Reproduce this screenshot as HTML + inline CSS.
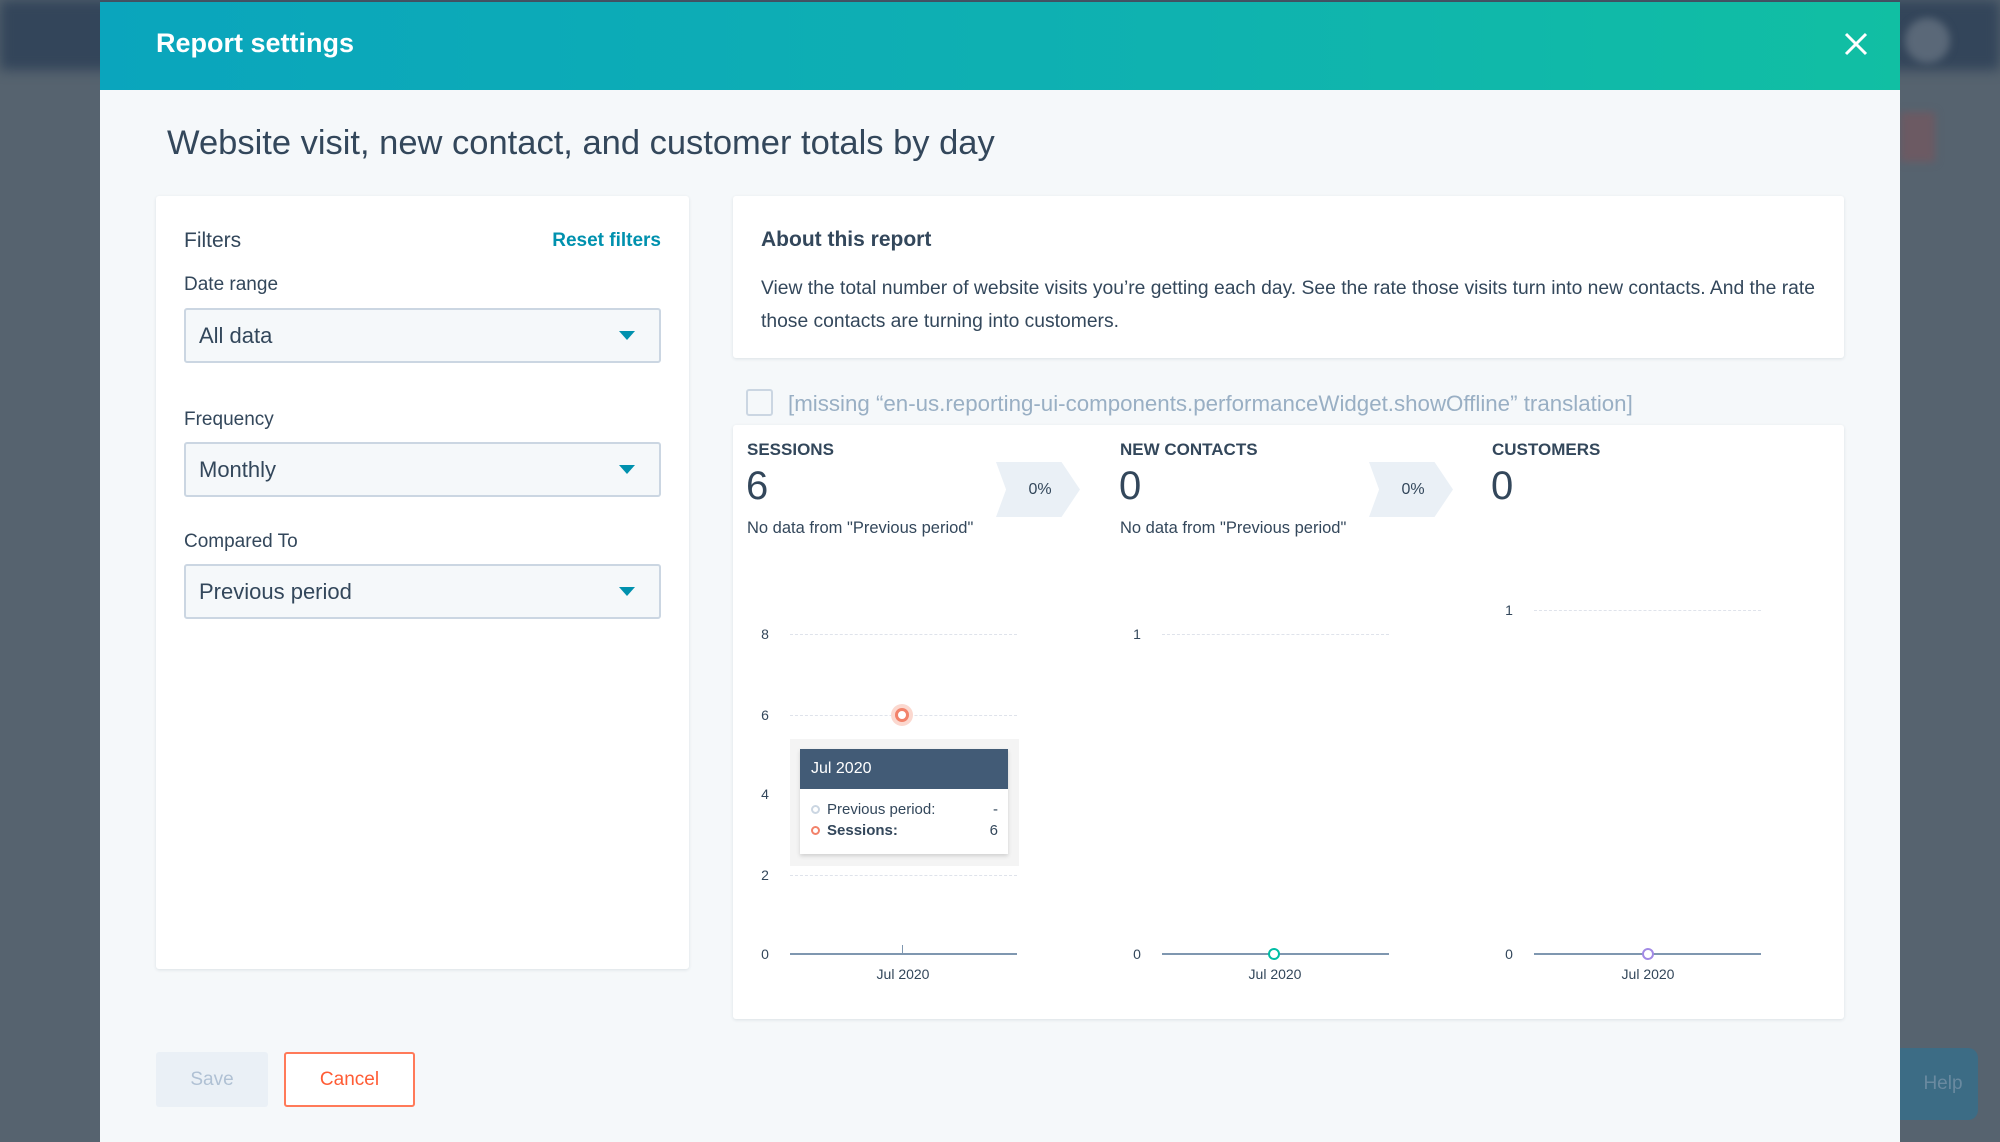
<!DOCTYPE html>
<html><head><meta charset="utf-8"><style>
*{box-sizing:border-box;margin:0;padding:0}
body{width:2000px;height:1142px;overflow:hidden;background:#56636f;font-family:"Liberation Sans",sans-serif;color:#33475b;position:relative}
.abs{position:absolute}
.topband{left:0;top:0;width:2000px;height:70px;background:#33455a;filter:blur(6px)}
.modal{left:100px;top:2px;width:1800px;height:1140px;background:#f5f8fa}
.hdr{left:0;top:0;width:1800px;height:88px;background:linear-gradient(90deg,#0aa5bd,#0fb2b0 60%,#11bfa3)}
.card{background:#fff;border-radius:3px;box-shadow:0 1px 3px rgba(45,62,80,.12)}
.sel{position:absolute;left:28px;width:477px;height:55px;background:#f5f8fa;border:2px solid #cbd6e2;border-radius:3px;font-size:22px;padding:0 13px;line-height:51px;color:#33475b}
.sel:after{content:"";position:absolute;right:24px;top:21px;border-left:8px solid transparent;border-right:8px solid transparent;border-top:9px solid #0091ae}
.lbl{position:absolute;left:28px;font-size:19px}
.grid{position:absolute;border-top:1px dashed #dfe3eb;height:0}
.ax{position:absolute;font-size:14px;width:20px;text-align:center}
.cat{position:absolute;font-size:17px;font-weight:bold;color:#33475b}
.big{position:absolute;font-size:40px;font-weight:300}
.nd{position:absolute;font-size:16.5px}
.chev{position:absolute;width:84px;height:55px;background:#eaf0f6;clip-path:polygon(0 0,78% 0,100% 50%,78% 100%,0 100%,12% 50%);font-size:16px;text-align:center;line-height:55px;padding-left:4px}
.dot{position:absolute;width:14px;height:14px;border-radius:50%;background:#fff}
</style></head><body>
<div class="abs topband"></div>
<div class="abs" style="left:1905px;top:18px;width:45px;height:45px;border-radius:50%;background:#5a6878;filter:blur(4px)"></div>
<div class="abs" style="left:1900px;top:112px;width:35px;height:50px;background:#6c5a63;filter:blur(4px)"></div>
<div class="abs" style="left:1900px;top:1048px;width:78px;height:72px;background:#3c6c85;border-radius:0 10px 10px 0;color:#6a8aa0;font-size:19px;line-height:72px;text-align:center;padding-left:8px">Help</div>
<div class="abs modal">
 <div class="abs hdr"></div>
 <div class="abs" style="left:56px;top:26px;font-size:27px;color:#fff;font-weight:bold">Report settings</div>
 <svg class="abs" style="left:1744px;top:30px" width="24" height="24"><path d="M2 2L22 22M22 2L2 22" stroke="#fff" stroke-width="3"/></svg>
 <div class="abs" style="left:67px;top:122px;font-size:34.5px;font-weight:300;color:#33475b">Website visit, new contact, and customer totals by day</div>

 <div class="abs card" style="left:56px;top:194px;width:533px;height:773px">
  <div class="abs" style="left:28px;top:33px;font-size:21px">Filters</div>
  <div class="abs" style="right:28px;top:34px;font-size:19px;color:#0091ae;font-weight:bold">Reset filters</div>
  <div class="lbl" style="top:78px">Date range</div>
  <div class="sel" style="top:112px">All data</div>
  <div class="lbl" style="top:213px">Frequency</div>
  <div class="sel" style="top:246px">Monthly</div>
  <div class="lbl" style="top:335px">Compared To</div>
  <div class="sel" style="top:368px">Previous period</div>
 </div>

 <div class="abs card" style="left:633px;top:194px;width:1111px;height:162px">
  <div class="abs" style="left:28px;top:32px;font-size:21px;font-weight:bold;color:#33475b">About this report</div>
  <div class="abs" style="left:28px;top:76px;width:1070px;font-size:19.3px;line-height:33px">View the total number of website visits you’re getting each day. See the rate those visits turn into new contacts. And the rate those contacts are turning into customers.</div>
 </div>

 <div class="abs" style="left:646px;top:387px;width:27px;height:27px;border:2px solid #cbd6e2;border-radius:3px;background:#f5f8fa"></div>
 <div class="abs" style="left:688px;top:389px;font-size:22.3px;font-weight:300;color:#99afc4">[missing “en-us.reporting-ui-components.performanceWidget.showOffline” translation]</div>

 <div class="abs card" style="left:633px;top:423px;width:1111px;height:594px">
  <div class="cat" style="left:14px;top:15px">SESSIONS</div>
  <div class="big" style="left:13px;top:39px">6</div>
  <div class="nd" style="left:14px;top:94px">No data from "Previous period"</div>
  <div class="chev" style="left:263px;top:37px">0%</div>
  <div class="cat" style="left:387px;top:15px">NEW CONTACTS</div>
  <div class="big" style="left:386px;top:39px">0</div>
  <div class="nd" style="left:387px;top:94px">No data from "Previous period"</div>
  <div class="chev" style="left:636px;top:37px">0%</div>
  <div class="cat" style="left:759px;top:15px">CUSTOMERS</div>
  <div class="big" style="left:758px;top:39px">0</div>

  <div class="ax" style="left:22px;top:201px">8</div><div class="grid" style="left:57px;top:209px;width:227px"></div>
  <div class="ax" style="left:22px;top:282px">6</div><div class="grid" style="left:57px;top:290px;width:227px"></div>
  <div class="ax" style="left:22px;top:361px">4</div>
  <div class="ax" style="left:22px;top:442px">2</div><div class="grid" style="left:57px;top:450px;width:227px"></div>
  <div class="ax" style="left:22px;top:521px">0</div><div class="abs" style="left:57px;top:528px;width:227px;height:2px;background:#7f97b0"></div>
  <div class="abs" style="left:169px;top:520px;width:1px;height:8px;background:#7f97b0"></div>
  <div class="abs" style="left:140px;top:541px;width:60px;text-align:center;font-size:14px">Jul 2020</div>
  <div class="abs" style="left:158px;top:279px;width:22px;height:22px;border-radius:50%;background:#fbd8cf"></div>
  <div class="dot" style="left:162px;top:283px;border:3px solid #f2826a"></div>
  <div class="abs" style="left:57px;top:314px;width:229px;height:127px;background:#f4f4f4"></div>
  <div class="abs" style="left:67px;top:324px;width:208px;height:105px;background:#fff;box-shadow:0 2px 4px rgba(0,0,0,.15)">
   <div style="height:40px;background:#425b76;color:#fff;font-size:16px;line-height:40px;padding-left:11px">Jul 2020</div>
   <div style="position:relative;font-size:15px;padding:10px 11px 0 27px;line-height:21px">Previous period:<br><b>Sessions:</b>
    <span style="position:absolute;left:11px;top:16px;width:9px;height:9px;border:2px solid #cbd6e2;border-radius:50%"></span>
    <span style="position:absolute;left:11px;top:37px;width:9px;height:9px;border:2px solid #f2826a;border-radius:50%"></span>
    <span style="position:absolute;right:10px;top:10px">-</span><span style="position:absolute;right:10px;top:31px">6</span>
   </div>
  </div>

  <div class="ax" style="left:394px;top:201px">1</div><div class="grid" style="left:429px;top:209px;width:227px"></div>
  <div class="ax" style="left:394px;top:521px">0</div><div class="abs" style="left:429px;top:528px;width:227px;height:2px;background:#7f97b0"></div>
  <div class="dot" style="left:535px;top:523px;width:12px;height:12px;border:2.5px solid #00bda5"></div>
  <div class="abs" style="left:512px;top:541px;width:60px;text-align:center;font-size:14px">Jul 2020</div>

  <div class="ax" style="left:766px;top:177px">1</div><div class="grid" style="left:801px;top:185px;width:227px"></div>
  <div class="ax" style="left:766px;top:521px">0</div><div class="abs" style="left:801px;top:528px;width:227px;height:2px;background:#7f97b0"></div>
  <div class="dot" style="left:909px;top:523px;width:12px;height:12px;border:2.5px solid #a28ae5"></div>
  <div class="abs" style="left:885px;top:541px;width:60px;text-align:center;font-size:14px">Jul 2020</div>
 </div>

 <div class="abs" style="left:56px;top:1050px;width:112px;height:55px;background:#eaf0f6;border-radius:3px;color:#b0c1d4;font-size:19px;text-align:center;line-height:55px">Save</div>
 <div class="abs" style="left:184px;top:1050px;width:131px;height:55px;background:#fff;border:2px solid #ff7a59;border-radius:3px;color:#ff5c35;font-size:19px;text-align:center;line-height:51px">Cancel</div>
</div>
</body></html>
